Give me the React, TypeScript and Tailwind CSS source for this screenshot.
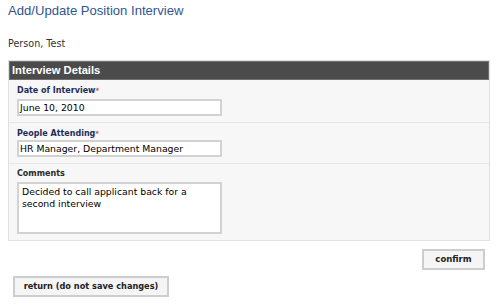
import React from "react";

const Field = ({
  label,
  required,
  children,
  last,
  first,
  dark,
}: {
  label: string;
  required?: boolean;
  children: React.ReactNode;
  last?: boolean;
  first?: boolean;
  dark?: boolean;
}) => (
  <div
    className={
      "px-2 pb-[6px] " +
      (first ? "pt-[5px] " : last ? "pt-[4px] " : "pt-[5px] ") +
      (last ? "" : "border-b border-[#e6e6e6]")
    }
  >
    <div
      className={
        "text-[8px] font-bold leading-[12px] h-[12px] " +
        (dark ? "text-[#2a2a2a]" : "text-[#1e2d55]")
      }
    >
      {label}
      {required && <span className="text-[#b4543a] text-[7px] align-top">*</span>}
    </div>
    <div className={first || last ? "mt-[2px]" : ""}>{children}</div>
  </div>
);

export default function App() {
  return (
    <div className="w-[500px] h-[305px] bg-white font-['DejaVu_Sans',sans-serif] text-[#222] overflow-hidden">
      <h1 className="font-['Liberation_Sans',sans-serif] text-[13.1px] leading-[16px] text-[#31558f] pl-2 pt-[3px]">
        Add/Update Position Interview
      </h1>
      <p className="text-[9.6px] leading-[12px] pl-2 mt-[19px] text-[#333]">Person, Test</p>

      <div className="ml-2 w-[482px] mt-[10px] border border-[#e0e0e0] bg-[#f7f7f7]">
        <div className="h-[19px] bg-[#4b4b4b] border border-[#707070] text-white font-['Liberation_Sans',sans-serif] font-bold text-[11.2px] leading-[17px] px-[2px]">
          Interview Details
        </div>
        <Field label="Date of Interview" required first>
          <div className="w-[205px] h-[17px] border-2 border-[#d2d2d2] bg-white text-[9.3px] leading-[13px] px-[1px] text-black">
            June 10, 2010
          </div>
        </Field>
        <Field label="People Attending" required>
          <div className="w-[205px] h-[17px] border-2 border-[#d2d2d2] bg-white text-[9.3px] leading-[13px] px-[1px] text-black">
            HR Manager, Department Manager
          </div>
        </Field>
        <Field label="Comments" last dark>
          <div className="w-[205px] h-[52px] border-2 border-[#d2d2d2] bg-white text-[9.3px] leading-[12px] px-[3px] py-[2px] text-black">
            Decided to call applicant back for a second interview
          </div>
        </Field>
      </div>

      <div className="flex justify-end pr-[15px] mt-[8px]">
        <button className="w-[63px] h-[21px] border-2 border-[#cdcdcd] bg-[#f5f5f5] text-[8.5px] font-bold text-[#222]">
          confirm
        </button>
      </div>
      <div className="pl-[13px] mt-[2px]">
        <button className="w-[156px] h-[21px] border-2 border-[#cdcdcd] bg-[#f5f5f5] text-[8.2px] font-bold text-[#222]">
          return (do not save changes)
        </button>
      </div>
    </div>
  );
}
